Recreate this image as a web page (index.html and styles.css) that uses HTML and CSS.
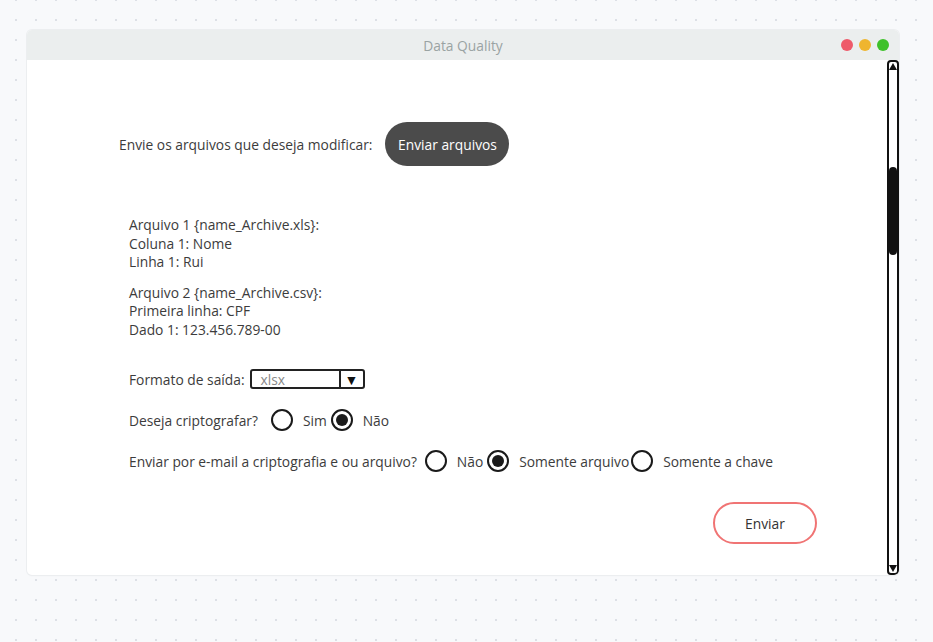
FILE: index.html
```html
<!DOCTYPE html>
<html lang="pt">
<head>
<meta charset="utf-8">
<title>Data Quality</title>
<link rel="stylesheet" href="styles.css">
</head>
<body>
<div class="window">
  <div class="titlebar">
    <span class="title">Data Quality</span>
    <div class="lights">
      <span class="light red"></span>
      <span class="light yellow"></span>
      <span class="light green"></span>
    </div>
  </div>
  <div class="body">
    <div class="content">
      <div class="upload-row">
        <span class="label">Envie os arquivos que deseja modificar:</span>
        <button class="btn-dark">Enviar arquivos</button>
      </div>
      <div class="files">
        <div class="file">
          <div>Arquivo 1 {name_Archive.xls}:</div>
          <div>Coluna 1: Nome</div>
          <div>Linha 1: Rui</div>
        </div>
        <div class="file">
          <div>Arquivo 2 {name_Archive.csv}:</div>
          <div>Primeira linha: CPF</div>
          <div>Dado 1: 123.456.789-00</div>
        </div>
      </div>
      <div class="form">
        <div class="row">
          <span>Formato de saída:</span>
          <div class="select"><span class="sel-val">xlsx</span><span class="sel-arrow">▼</span></div>
        </div>
        <div class="row">
          <span class="q">Deseja criptografar?</span>
          <span class="radio first"></span><span class="opt">Sim</span>
          <span class="radio on"></span><span class="opt">Não</span>
        </div>
        <div class="row">
          <span class="q">Enviar por e-mail a criptografia e ou arquivo?</span>
          <span class="radio first narrow"></span><span class="opt">Não</span>
          <span class="radio on"></span><span class="opt">Somente arquivo</span>
          <span class="radio tight"></span><span class="opt">Somente a chave</span>
        </div>
      </div>
      <div class="actions">
        <button class="btn-outline">Enviar</button>
      </div>
    </div>
    <div class="scrollbar">
      <span class="arr up"></span>
      <span class="thumb"></span>
      <span class="arr down"></span>
    </div>
  </div>
</div>
</body>
</html>
```

FILE: styles.css
```css
html, body { margin: 0; padding: 0; }
body {
  width: 933px;
  height: 642px;
  background-color: #f8f9fb;
  background-image: radial-gradient(circle, #dde0e6 1px, transparent 1.3px);
  background-size: 20px 20px;
  background-position: 6px -10px;
  font-family: "Open Sans", "Noto Sans", sans-serif;
  color: #3c3c3c;
  overflow: hidden;
  padding: 30px 34px 0 27px;
  box-sizing: border-box;
}
.window {
  width: 872px;
  height: 545px;
  background: #fff;
  border-radius: 5px;
  box-shadow: 0 0 0 1px #eceef0, 0 1px 2px rgba(0,0,0,0.04);
  display: flex;
  flex-direction: column;
  overflow: hidden;
}
.titlebar {
  height: 30px;
  flex: none;
  background: #ebeeee;
  display: flex;
  align-items: center;
  justify-content: center;
  position: relative;
}
.title {
  font-size: 13.8px;
  color: #9aa3a3;
}
.lights {
  position: absolute;
  right: 10px;
  top: 9px;
  display: flex;
  gap: 6px;
}
.light { width: 12px; height: 12px; border-radius: 50%; }
.red { background: #ee5a6a; }
.yellow { background: #efb52f; }
.green { background: #3ec12a; }
.body {
  flex: 1;
  display: flex;
}
.content {
  flex: 1;
  padding: 62px 0 0 92px;
  font-size: 13.8px;
}
.upload-row {
  display: flex;
  align-items: center;
  gap: 13px;
}
.label { color: #3c3c3c; }
.btn-dark {
  height: 44px;
  width: 124px;
  border: none;
  border-radius: 22px;
  background: #4b4b4b;
  color: #fff;
  font-family: inherit;
  font-size: 13.8px;
  padding: 0;
}
.files {
  padding: 50px 0 0 10px;
  line-height: 18.5px;
}
.file { margin-bottom: 12px; }
.form {
  padding: 16px 0 0 10px;
  display: flex;
  flex-direction: column;
  gap: 17px;
}
.row {
  display: flex;
  align-items: center;
  height: 24px;
}
.select {
  margin-left: 5px;
  width: 115px;
  height: 20px;
  border: 2px solid #222;
  border-radius: 3px;
  box-sizing: border-box;
  display: flex;
  align-items: center;
}
.sel-val {
  flex: 1;
  padding-left: 9px;
  color: #888;
  font-size: 13.8px;
}
.sel-arrow {
  width: 22px;
  height: 100%;
  border-left: 2px solid #222;
  display: flex;
  align-items: center;
  justify-content: center;
  font-size: 14px;
  color: #111;
}
.radio {
  width: 18px;
  height: 18px;
  border: 2px solid #1a1a1a;
  border-radius: 50%;
  box-sizing: content-box;
  margin-left: 4px;
  margin-right: 10px;
  display: inline-flex;
  align-items: center;
  justify-content: center;
  flex: none;
}
.radio.first { margin-left: 13px; }
.radio.first.narrow { margin-left: 8px; }
.radio.tight { margin-left: 2px; }
.radio.on::after {
  content: "";
  width: 12px;
  height: 12px;
  border-radius: 50%;
  background: #1a1a1a;
}
.actions {
  display: flex;
  justify-content: flex-end;
  padding: 29px 70px 0 0;
}
.btn-outline {
  width: 104px;
  height: 42px;
  border: 2px solid #f07474;
  border-radius: 21px;
  background: #fff;
  color: #333;
  font-family: inherit;
  font-size: 13.8px;
  padding: 0;
}
.scrollbar {
  width: 12px;
  box-sizing: border-box;
  border: 2px solid #111;
  border-radius: 4px;
  display: flex;
  flex-direction: column;
  align-items: center;
  position: relative;
}
.arr {
  width: 0; height: 0;
  border-left: 4px solid transparent;
  border-right: 4px solid transparent;
}
.arr.up { border-bottom: 7px solid #111; margin-top: 1px; }
.arr.down { border-top: 7px solid #111; margin-top: auto; margin-bottom: 1px; }
.thumb {
  position: absolute;
  top: 105px;
  left: 0;
  width: 8px;
  height: 88px;
  border-radius: 4px;
  background: #111;
}
```
